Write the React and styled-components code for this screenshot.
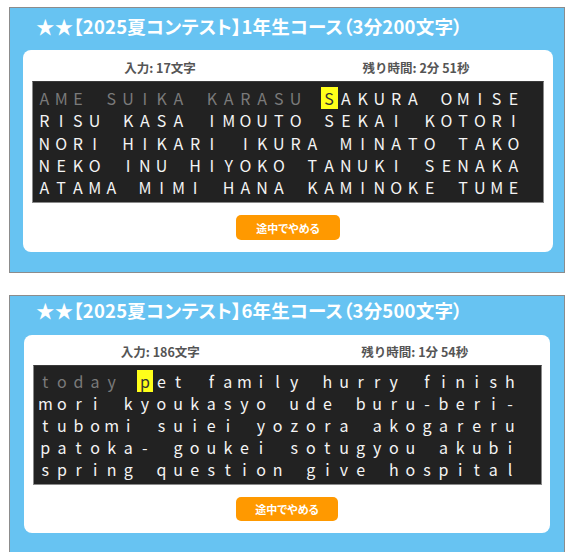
import React from "react";
import styled, { createGlobalStyle } from "styled-components";

const Global = createGlobalStyle`
  html, body { margin: 0; padding: 0; background: #ffffff; }
  body { font-family: "Noto Sans CJK JP", "Noto Sans", sans-serif; }
`;

const Page = styled.div`
  padding: 7px 0 0 9px;
  display: flex;
  flex-direction: column;
  gap: 22px;
  height: 545px;
  overflow: hidden;
`;

const Panel = styled.section`
  width: 554px;
  border: 1px solid #8c8c8c;
  background: #67c3f2;
  padding-bottom: 20px;
  flex-shrink: 0;
`;

const Title = styled.h1`
  margin: 0;
  height: ${(p) => p.$h}px;
  box-sizing: border-box;
  padding: ${(p) => p.$pt}px 0 0 26px;
  color: #ffffff;
  font-size: 18.5px;
  font-weight: 700;
  line-height: 24px;
  font-feature-settings: "palt";
  letter-spacing: 0.2px;
`;

const Card = styled.div`
  margin-left: ${(p) => p.$ml}px;
  width: ${(p) => p.$w}px;
  box-sizing: border-box;
  background: #ffffff;
  border-radius: 8px;
  padding: ${(p) => p.$pt}px 9px 12px 9px;
  display: flex;
  flex-direction: column;
  align-items: flex-start;
`;

const Stats = styled.div`
  width: ${(p) => p.$w}px;
  display: grid;
  grid-template-columns: 1fr 1fr;
  margin-bottom: ${(p) => p.$mb}px;
`;

const Stat = styled.div`
  text-align: center;
  color: #555555;
  font-size: 12.5px;
  font-weight: 700;
  line-height: 21px;
`;

const Board = styled.div`
  width: ${(p) => p.$w}px;
  box-sizing: border-box;
  background: #222222;
  border: 1px solid #8a8a8a;
  border-top-color: #3a3a3a;
  padding: ${(p) => p.$pt}px 3px 4px 3px;
`;

const Row = styled.div`
  display: flex;
  height: ${(p) => p.$lh}px;
`;

const Cell = styled.span`
  width: ${(p) => p.$w}px;
  flex-shrink: 0;
  text-align: center;
  font-size: 16px;
  line-height: ${(p) => p.$lh}px;
  color: ${(p) => (p.$state === "done" ? "#7a7a7a" : p.$state === "cur" ? "#333333" : "#f4f4f4")};
  background: ${(p) => (p.$state === "cur" ? "#ffff1a" : "transparent")};
  white-space: pre;
`;

const StopButton = styled.button`
  align-self: center;
  margin-top: 12px;
  width: ${(p) => p.$w}px;
  height: ${(p) => p.$h}px;
  border: none;
  border-radius: 5px;
  background: #ff9900;
  color: #ffffff;
  font-family: "Noto Sans CJK JP", sans-serif;
  font-size: 11px;
  font-weight: 700;
  font-feature-settings: "palt";
  padding: 0;
  cursor: pointer;
`;

const panels = [
  {
    title: "★★【2025夏コンテスト】1年生コース（3分200文字）",
    input: "入力: 17文字",
    remain: "残り時間: 2分 51秒",
    cur: 17,
    lines: [
      "AME SUIKA KARASU SAKURA OMISE",
      "RISU KASA IMOUTO SEKAI KOTORI",
      "NORI HIKARI IKURA MINATO TAKO",
      "NEKO INU HIYOKO TANUKI SENAKA",
      "ATAMA MIMI HANA KAMINOKE TUME",
    ],
    titleH: 42,
    titlePt: 6,
    cardMl: 13,
    cardW: 530,
    cardPt: 7,
    statsMb: 3,
    boardW: 512,
    boardPt: 5,
    lh: 22.25,
    cw: 16.75,
    btnW: 104,
    btnH: 25,
  },
  {
    title: "★★【2025夏コンテスト】6年生コース（3分500文字）",
    input: "入力: 186文字",
    remain: "残り時間: 1分 54秒",
    cur: 6,
    lines: [
      "today pet family hurry finish",
      "mori kyoukasyo ude buru-beri-",
      "tubomi suiei yozora akogareru",
      "patoka- goukei sotugyou akubi",
      "spring question give hospital",
    ],
    titleH: 39,
    titlePt: 2,
    cardMl: 14,
    cardW: 526,
    cardPt: 6,
    statsMb: 3,
    boardW: 509,
    boardPt: 4,
    lh: 22,
    cw: 16.6,
    btnW: 102,
    btnH: 24,
  },
];

function TypingPanel({ p }) {
  let idx = 0;
  return (
    <Panel>
      <Title $h={p.titleH} $pt={p.titlePt}>{p.title}</Title>
      <Card $ml={p.cardMl} $w={p.cardW} $pt={p.cardPt}>
        <Stats $w={p.boardW} $mb={p.statsMb}>
          <Stat>{p.input}</Stat>
          <Stat>{p.remain}</Stat>
        </Stats>
        <Board $w={p.boardW} $pt={p.boardPt}>
          {p.lines.map((line, li) => (
            <Row key={li} $lh={p.lh}>
              {line.split("").map((ch, ci) => {
                const i = idx++;
                const state = i < p.cur ? "done" : i === p.cur ? "cur" : "todo";
                return (
                  <Cell key={ci} $w={p.cw} $lh={p.lh} $state={state}>
                    {ch}
                  </Cell>
                );
              })}
            </Row>
          ))}
        </Board>
        <StopButton $w={p.btnW} $h={p.btnH}>途中でやめる</StopButton>
      </Card>
    </Panel>
  );
}

export default function App() {
  return (
    <>
      <Global />
      <Page>
        {panels.map((p, i) => (
          <TypingPanel key={i} p={p} />
        ))}
      </Page>
    </>
  );
}
